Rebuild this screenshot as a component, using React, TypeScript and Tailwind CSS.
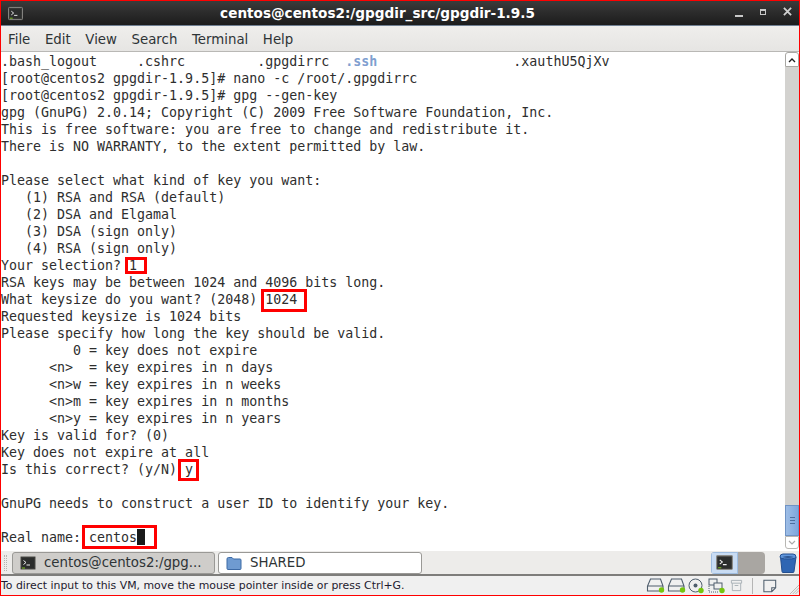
const lines: { text: string; extra?: string }[] = [
  { text: ".bash_logout     .cshrc         .gpgdirrc  ", extra: ".ssh" },
  { text: "[root@centos2 gpgdir-1.9.5]# nano -c /root/.gpgdirrc" },
  { text: "[root@centos2 gpgdir-1.9.5]# gpg --gen-key" },
  { text: "gpg (GnuPG) 2.0.14; Copyright (C) 2009 Free Software Foundation, Inc." },
  { text: "This is free software: you are free to change and redistribute it." },
  { text: "There is NO WARRANTY, to the extent permitted by law." },
  { text: " " },
  { text: "Please select what kind of key you want:" },
  { text: "   (1) RSA and RSA (default)" },
  { text: "   (2) DSA and Elgamal" },
  { text: "   (3) DSA (sign only)" },
  { text: "   (4) RSA (sign only)" },
  { text: "Your selection? 1" },
  { text: "RSA keys may be between 1024 and 4096 bits long." },
  { text: "What keysize do you want? (2048) 1024" },
  { text: "Requested keysize is 1024 bits" },
  { text: "Please specify how long the key should be valid." },
  { text: "         0 = key does not expire" },
  { text: "      <n>  = key expires in n days" },
  { text: "      <n>w = key expires in n weeks" },
  { text: "      <n>m = key expires in n months" },
  { text: "      <n>y = key expires in n years" },
  { text: "Key is valid for? (0)" },
  { text: "Key does not expire at all" },
  { text: "Is this correct? (y/N) y" },
  { text: " " },
  { text: "GnuPG needs to construct a user ID to identify your key." },
  { text: " " },
  { text: "Real name: centos" },
];

const marks = [
  "left-[124px] top-[205px] w-[22px] h-[17px]",
  "left-[260px] top-[237px] w-[46px] h-[23px]",
  "left-[177px] top-[407px] w-[21px] h-[22px]",
  "left-[81px] top-[473px] w-[75px] h-[24px]",
];

const TerminalIcon = ({ className }: { className: string }) => (
  <svg viewBox="0 0 16 16" className={className}>
    <rect x="0.5" y="1.5" width="15" height="13" rx="1" fill="#3a3a38" stroke="#8c8c88" />
    <rect x="2" y="3" width="12" height="10" fill="#2b2d2c" />
    <path d="M3.5 5.5 L6 7.5 L3.5 9.5" fill="none" stroke="#eee" strokeWidth="1" />
    <path d="M6.5 10 H10" stroke="#eee" strokeWidth="1" />
    <path d="M2 13 H5" stroke="#7fc31c" strokeWidth="1" />
  </svg>
);

const Disk = () => (
  <svg viewBox="0 0 20 15" className="w-[20px] h-[15px]">
    <path d="M4.5 1 H14.5 L17 8 V13 H1.5 V8 Z M2 8 H16.5" fill="none" stroke="#4e5d6c" strokeWidth="1.1" />
    <circle cx="15.5" cy="12" r="2.7" fill="#76c40e" />
  </svg>
);

export default function App() {
  return (
    <div className="w-[800px] h-[596px] flex flex-col overflow-hidden border border-[#f00] bg-[#edecea] font-['Liberation_Sans',sans-serif]">
      {/* title bar */}
      <div className="h-[25px] shrink-0 flex items-center bg-gradient-to-b from-[#3b3b3b] to-[#1c1c1c] border-b border-[#6f7f92]">
        <div className="w-[24px] pl-[7px]">
          <TerminalIcon className="w-[15px] h-[15px]" />
        </div>
        <div className="w-[705px] text-center text-white font-bold text-[13.6px] font-['DejaVu_Sans',sans-serif]">
          centos@centos2:/gpgdir_src/gpgdir-1.9.5
        </div>
        <div className="flex items-center gap-[17px] pl-[5px]">
          <div className="w-[8px] h-[2px] bg-[#c8c8c8] mt-[6px]" />
          <div className="w-[6px] h-[6px] border border-[#c8c8c8] border-t-2 mt-[-2px]" />
          <svg viewBox="0 0 10 10" className="w-[9px] h-[9px] mt-[-3px]">
            <path d="M1 1 L9 9 M9 1 L1 9" stroke="#d0d0d0" strokeWidth="2" />
          </svg>
        </div>
      </div>
      {/* menu bar */}
      <div className="h-[26px] shrink-0 flex items-center gap-[14.6px] pl-[7px] pt-[2px] bg-gradient-to-b from-[#efeeec] to-[#e6e5e3] border-b border-[#b9b8b5] text-[13.33px] text-[#2e3436] font-['DejaVu_Sans',sans-serif]">
        <span>File</span>
        <span>Edit</span>
        <span>View</span>
        <span>Search</span>
        <span>Terminal</span>
        <span>Help</span>
      </div>
      {/* terminal */}
      <div className="h-[499px] shrink-0 flex bg-white">
        <div className="relative flex-1 overflow-hidden pt-px font-['DejaVu_Sans_Mono',monospace] text-[13.3px] leading-[17px] text-[#2e2e2e] whitespace-pre">
          {lines.map((l, i) => (
            <div key={i} className="h-[17px]">
              {l.text}
              {l.extra && <span className="text-[#7f9fd0] font-bold">{l.extra}</span>}
              {l.extra && "                 .xauthU5QjXv"}
              {l.text.startsWith("Real name") && (
                <span className="inline-block w-[8px] h-[16px] align-[-3px] bg-[#1a1a1a]" />
              )}
            </div>
          ))}
          {marks.map((m) => (
            <div key={m} className={`absolute border-[3px] border-[#f00] ${m}`} />
          ))}
        </div>
        {/* scrollbar */}
        <div className="w-[14px] shrink-0 flex flex-col pb-[2px]">
          <div className="h-[15px] bg-white border border-[#a8a7a3] rounded-t-[3px] flex items-center justify-center">
            <svg viewBox="0 0 8 6" className="w-[8px] h-[6px]">
              <path d="M1 5 L4 2 L7 5" fill="none" stroke="#222" strokeWidth="1.4" />
            </svg>
          </div>
          <div className="flex-1 bg-[#d3d2cf]" />
          <div className="h-[31px] bg-gradient-to-r from-[#9dbde6] to-[#7ea6dc] border border-[#6f93c4] flex flex-col items-center justify-center gap-[2px]">
            <div className="w-[5px] h-px bg-[#4d6f9e]" />
            <div className="w-[5px] h-px bg-[#4d6f9e]" />
            <div className="w-[5px] h-px bg-[#4d6f9e]" />
          </div>
          <div className="h-[13px] bg-white border border-[#b8b7b3] rounded-b-[3px] flex items-center justify-center">
            <svg viewBox="0 0 8 6" className="w-[8px] h-[6px]">
              <path d="M1 1 L4 4 L7 1" fill="none" stroke="#aaa" strokeWidth="1.2" />
            </svg>
          </div>
        </div>
      </div>
      {/* task bar */}
      <div className="h-[25px] shrink-0 flex items-center bg-[#edecea] border-b-2 border-[#7e7d7b] text-[13.33px] text-[#2e3436] font-['DejaVu_Sans',sans-serif]">
        <div className="w-[11px] flex justify-center">
          <div className="w-[3px] h-[16px] ml-[-2px] border-x border-dotted border-[#b5b4b1]" />
        </div>
        <div className="w-[203px] h-[22px] flex items-center rounded-[3px] border border-[#9a9996] bg-[#cfcdca] pl-[7px]">
          <TerminalIcon className="w-[16px] h-[16px]" />
          <span className="ml-[8px]">centos@centos2:/gpg...</span>
        </div>
        <div className="w-[204px] h-[22px] ml-[3px] flex items-center rounded-[3px] border border-[#9a9996] bg-white pl-[7px]">
          <svg viewBox="0 0 16 16" className="w-[16px] h-[16px]">
            <path d="M1 4 Q1 2.5 2.5 2.5 H6 L7.5 4 H14 Q15 4 15 5 V13.5 Q15 14.5 14 14.5 H2 Q1 14.5 1 13.5 Z" fill="#6f9bd1" stroke="#3d6aa5" />
          </svg>
          <span className="ml-[8px]">SHARED</span>
        </div>
        <div className="flex-1" />
        <div className="w-[54px] h-[22px] flex rounded-[4px] bg-[#a9a6a2] overflow-hidden">
          <div className="w-[27px] flex items-center justify-center bg-[#c9dcf3] border border-[#9fbde0]">
            <TerminalIcon className="w-[17px] h-[17px]" />
          </div>
        </div>
        <svg viewBox="0 0 19 20" className="w-[19px] h-[20px] ml-[13px] mr-[2px]">
          <path d="M2.5 4 L4 18.5 Q4 19.5 5 19.5 H15 Q16 19.5 16 18.5 L18 4 Z" fill="#2f66b3" stroke="#244f8f" />
          <path d="M2 4 Q2 1 5 1 H15 Q18 1 18 4 Q18 6 10 6 Q2 6 2 4 Z" fill="#5f96dc" stroke="#244f8f" />
          <path d="M4 4 Q10 2.5 16 4 Q10 5.5 4 4 Z" fill="#1c3f78" />
        </svg>
      </div>
      {/* status bar */}
      <div className="flex-1 flex items-center text-[10.9px] text-[#1d1a2e] font-['DejaVu_Sans',sans-serif] bg-[#f0f0f0]">
        <span className="flex-1 pt-px">To direct input to this VM, move the mouse pointer inside or press Ctrl+G.</span>
        <div className="flex items-center gap-[1px]">
          <Disk />
          <Disk />
          <svg viewBox="0 0 17 16" className="w-[17px] h-[16px]">
            <circle cx="7.5" cy="7.5" r="6.5" fill="none" stroke="#4e5d6c" />
            <circle cx="7.5" cy="7.5" r="2" fill="#4e5d6c" />
            <circle cx="13" cy="12.5" r="2.7" fill="#76c40e" />
          </svg>
          <svg viewBox="0 0 18 16" className="w-[18px] h-[16px] ml-[2px]">
            <rect x="1" y="1" width="8" height="6" fill="none" stroke="#4e5d6c" />
            <rect x="6" y="5" width="8" height="6" fill="#f0f0f0" stroke="#4e5d6c" />
            <path d="M1 8 V14 H11" fill="none" stroke="#4e5d6c" strokeDasharray="1 1" />
            <circle cx="14" cy="12.5" r="2.7" fill="#76c40e" />
          </svg>
          <svg viewBox="0 0 14 14" className="w-[13px] h-[13px] ml-[3px]">
            <path d="M1.5 1.5 H12.5 V4.5 H1.5 Z M2.5 4.5 V12.5 H11.5 V4.5 M5 7 H9" fill="none" stroke="#a8b0b6" />
          </svg>
          <div className="w-px h-[16px] bg-[#b5b5b5] ml-[8px] mr-[9px]" />
          <svg viewBox="0 0 16 16" className="w-[14px] h-[14px]">
            <path d="M1 1.5 H14.5 V10 L10 14.5 H1 Z M10 14.5 V10 H14.5" fill="none" stroke="#4e5d6c" strokeWidth="1.2" />
          </svg>
          <svg viewBox="0 0 10 10" className="w-[9px] h-[9px] ml-[12px] mt-[8px]">
            <path d="M0 10 L10 0 M3 10 L10 3 M6 10 L10 6" stroke="#b5b4b1" strokeWidth="1" />
          </svg>
        </div>
      </div>
    </div>
  );
}
